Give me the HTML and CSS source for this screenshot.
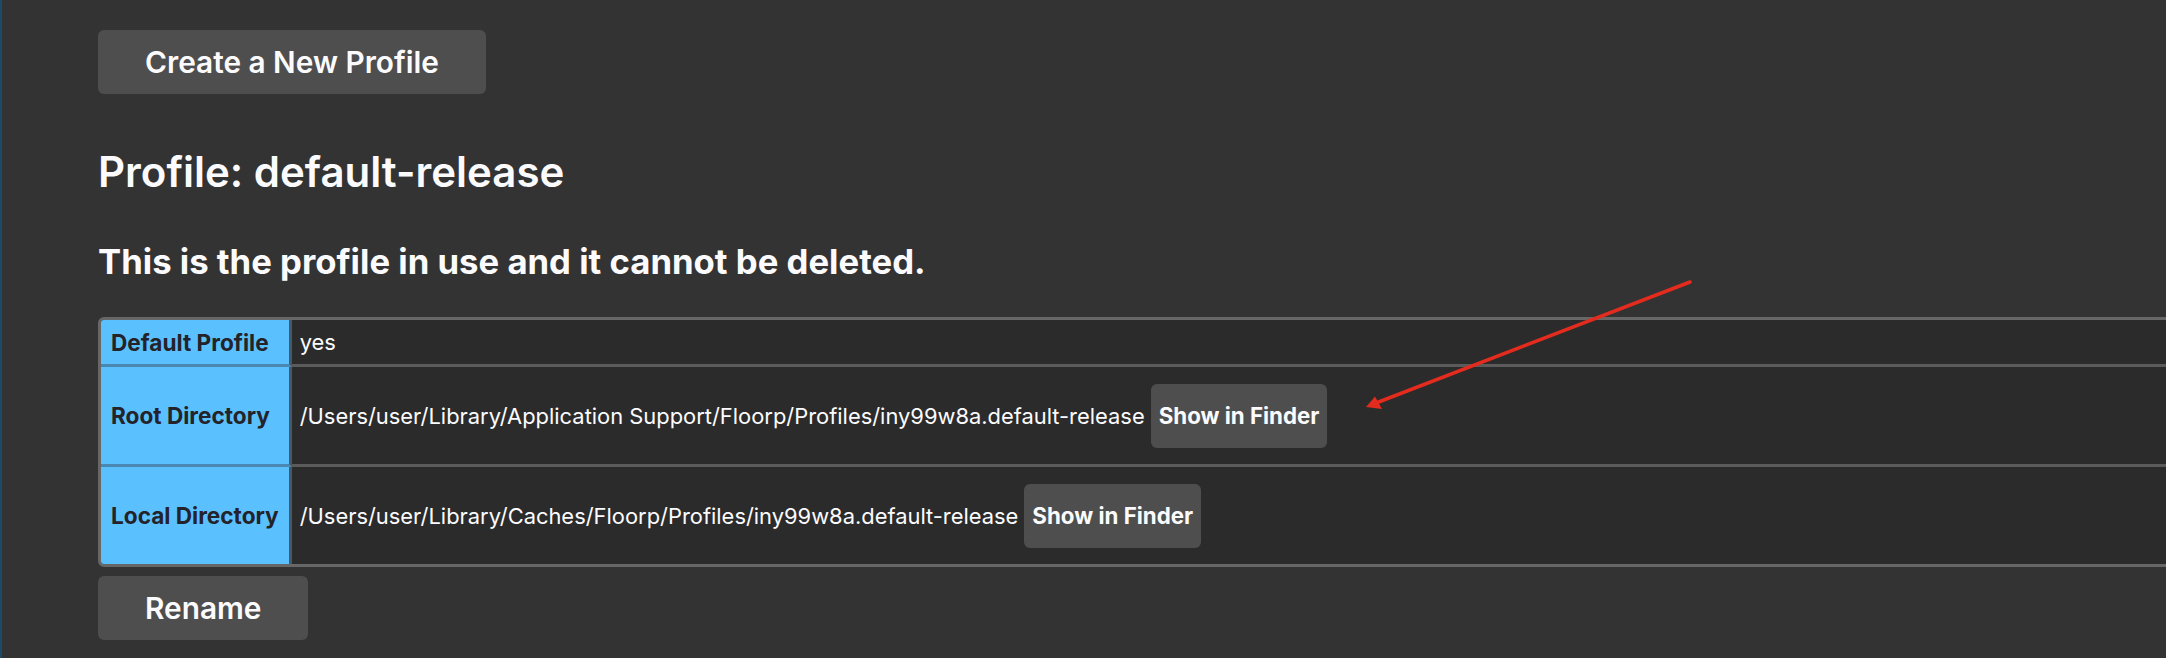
FILE: index.html
```html
<!DOCTYPE html>
<html lang="en">
<head>
<meta charset="utf-8">
<title>Profiles</title>
<link rel="stylesheet" href="styles.css">
</head>
<body>
<div class="page">
  <button class="btn btn-large">Create a New Profile</button>
  <h1 class="title">Profile: default-release</h1>
  <h2 class="subtitle">This is the profile in use and it cannot be deleted.</h2>
  <table class="info">
    <tr class="row-short">
      <th>Default Profile</th>
      <td><div class="cell">yes</div></td>
    </tr>
    <tr class="row-tall">
      <th>Root Directory</th>
      <td><div class="cell"><span class="path">/Users/user/Library/Application Support/Floorp/Profiles/iny99w8a.default-release</span><button class="btn btn-small">Show in Finder</button></div></td>
    </tr>
    <tr class="row-tall last">
      <th>Local Directory</th>
      <td><div class="cell"><span class="path">/Users/user/Library/Caches/Floorp/Profiles/iny99w8a.default-release</span><button class="btn btn-small">Show in Finder</button></div></td>
    </tr>
  </table>
  <button class="btn btn-large btn-rename">Rename</button>
</div>
<svg class="annotation" width="2166" height="658" viewBox="0 0 2166 658">
  <line x1="1690" y1="282" x2="1376" y2="403" stroke="#e32b1e" stroke-width="3.5" stroke-linecap="round"/>
  <polygon points="1366,407 1382,409 1375,396.5" fill="#e32b1e"/>
</svg>
</body>
</html>
```
FILE: styles.css
```css
html, body {
  margin: 0;
  padding: 0;
  background: #333333;
  overflow: hidden;
  width: 2166px;
  height: 658px;
}
body {
  position: relative;
  font-family: Inter, "Noto Sans", sans-serif;
  color: #fbfbfe;
  border-left: 2px solid #1c4a68;
  box-sizing: border-box;
}
.page {
  display: flex;
  flex-direction: column;
  align-items: flex-start;
  padding: 30px 0 0 96px;
}
.btn {
  font-family: Inter, "Noto Sans", sans-serif;
  background: #4e4e4e;
  color: #fbfbfe;
  border: none;
  border-radius: 6px;
  cursor: pointer;
  margin: 0;
}
.btn-large {
  height: 64px;
  padding: 0 47px;
  font-size: 29.8px;
  font-weight: 600;
}
.btn-small {
  height: 64px;
  padding: 0 8px;
  font-size: 22.3px;
  font-weight: 700;
  flex: none;
}
.btn-rename {
  margin-top: 9px;
}
.title {
  margin: 53px 0 0;
  font-size: 42px;
  line-height: 50px;
  font-weight: 600;
}
.subtitle {
  margin: 44px 0 0;
  font-size: 34.7px;
  line-height: 40px;
  font-weight: 700;
}
.info {
  margin-top: 36px;
  width: 2200px;
  border: 3px solid #676767;
  border-radius: 6px;
  border-spacing: 0;
  border-collapse: separate;
  overflow: hidden;
}
.info th {
  background: #5bc0fe;
  color: #232329;
  font-size: 22.6px;
  font-weight: 700;
  text-align: left;
  white-space: nowrap;
  padding: 0 10px;
  width: 1px;
  border-right: 3px solid #45596a;
  border-bottom: 3px solid #4a88b2;
}
.info td {
  background: #2b2b2b;
  padding: 0 8px;
  border-bottom: 3px solid #5b5b5b;
}
.info tr.last th,
.info tr.last td {
  border-bottom: none;
}
.cell {
  display: flex;
  align-items: center;
  gap: 6px;
  font-size: 21.9px;
  white-space: nowrap;
}
.row-short .cell {
  height: 44px;
}
.row-tall .cell {
  height: 97px;
}
.annotation {
  position: absolute;
  left: -2px;
  top: 0;
  pointer-events: none;
}
```
